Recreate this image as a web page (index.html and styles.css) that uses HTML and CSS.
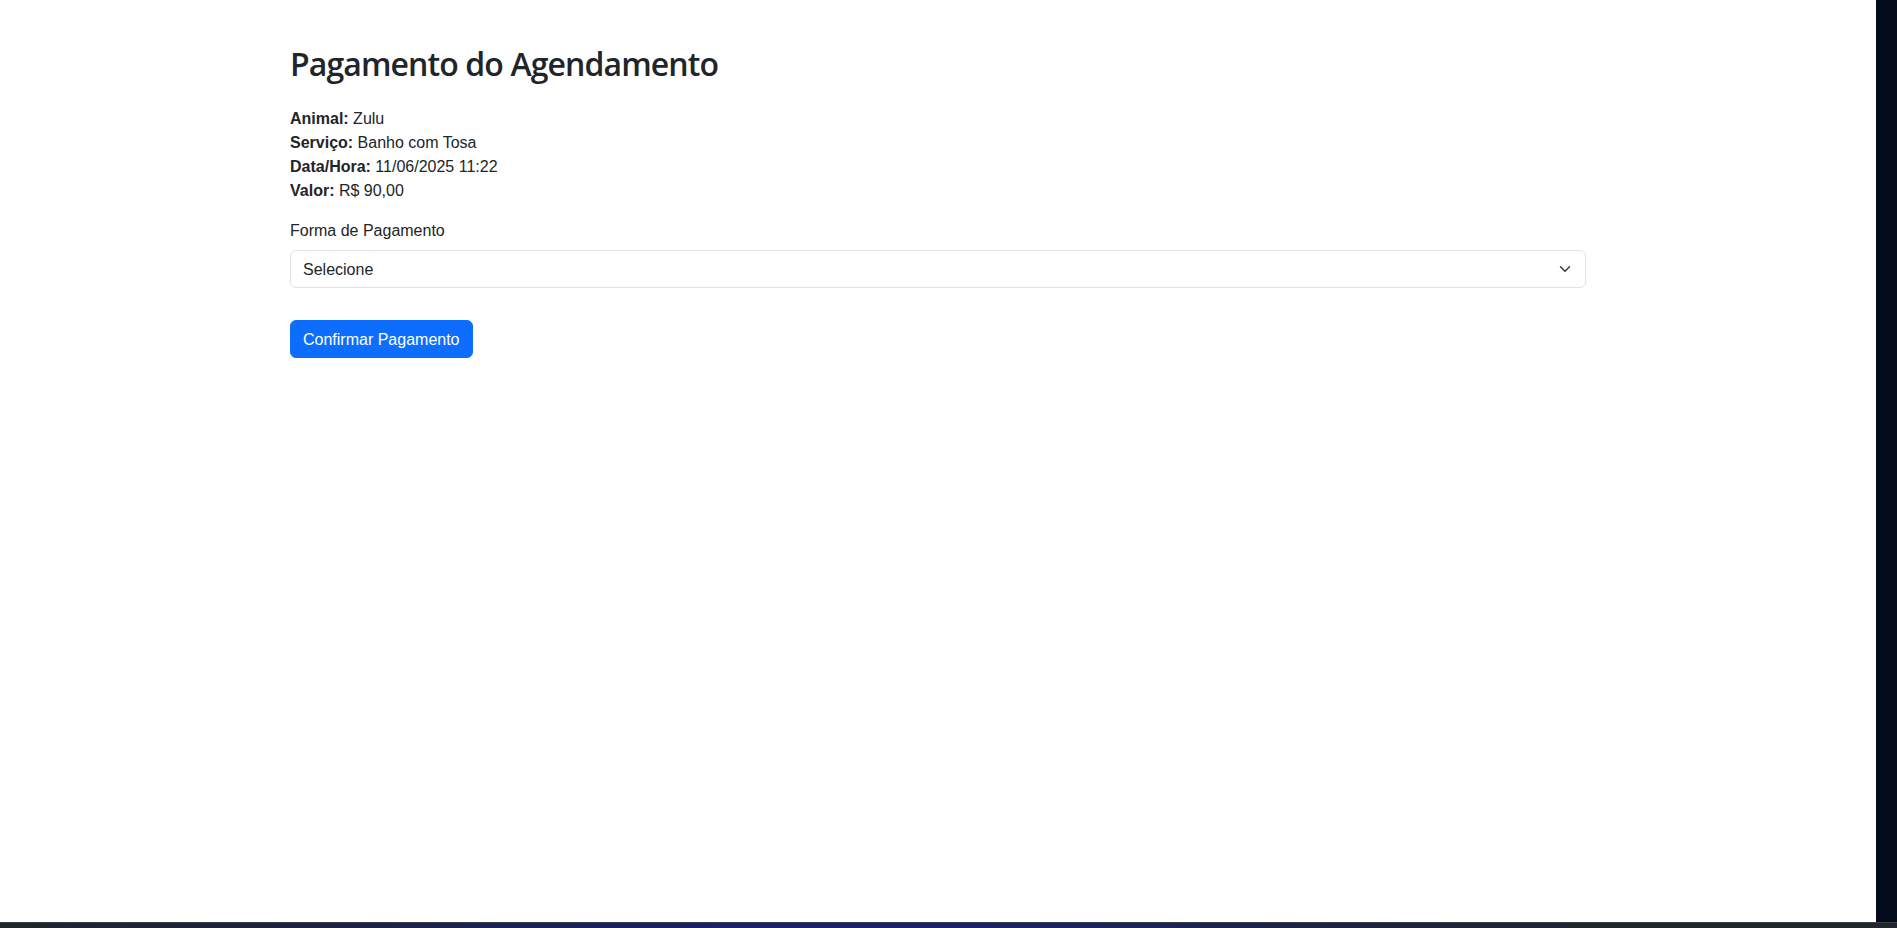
FILE: index.html
```html
<!DOCTYPE html>
<html lang="pt-BR">
<head>
<meta charset="utf-8">
<title>Pagamento do Agendamento</title>
<link rel="stylesheet" href="styles.css">
</head>
<body>
<div class="screen">
  <div class="viewport">
    <main class="container">
      <h2 class="title">Pagamento do Agendamento</h2>
      <div class="info">
        <div><strong>Animal:</strong> Zulu</div>
        <div><strong>Serviço:</strong> Banho com Tosa</div>
        <div><strong>Data/Hora:</strong> 11/06/2025 11:22</div>
        <div><strong>Valor:</strong> R$ 90,00</div>
      </div>
      <form class="form">
        <label class="form-label" for="forma">Forma de Pagamento</label>
        <div class="select-wrap">
          <select class="form-select" id="forma">
            <option>Selecione</option>
          </select>
          <svg class="chevron" width="16" height="12" viewBox="0 0 16 16" aria-hidden="true">
            <path d="m2 5 6 6 6-6" fill="none" stroke="#343a40" stroke-width="2" stroke-linecap="round" stroke-linejoin="round"/>
          </svg>
        </div>
        <button type="button" class="btn-primary">Confirmar Pagamento</button>
      </form>
    </main>
  </div>
  <div class="side"></div>
</div>
<div class="taskbar"></div>
</body>
</html>
```

FILE: styles.css
```css
* { box-sizing: border-box; }

html, body {
  margin: 0;
  padding: 0;
  height: 928px;
  overflow: hidden;
}

body {
  display: flex;
  flex-direction: column;
  background: #040c1c;
  font-family: "Segoe UI", "Liberation Sans", Arial, sans-serif;
  font-size: 16px;
  line-height: 1.5;
  color: #212529;
}

.screen {
  display: flex;
  height: 922px;
}

.viewport {
  width: 1876px;
  background: #ffffff;
}

.side {
  flex: 1;
  background: #040c1c;
}

.taskbar {
  height: 6px;
  border-top: 1px solid #3a3d45;
  background: linear-gradient(90deg, #22252c 0%, #1d2240 15%, #16226a 38%, #18246a 52%, #1c2448 68%, #22252c 85%, #22252c 100%);
}

.container {
  max-width: 1320px;
  margin: 0 auto;
  padding: 45px 12px 0;
}

.title {
  margin: 0 0 23.6px;
  font-family: "Open Sans", "Liberation Sans", Arial, sans-serif;
  font-size: 32px;
  font-weight: 600;
  letter-spacing: -0.9px;
  line-height: 38.4px;
  color: #212529;
}

.info {
  margin-bottom: 16px;
}

.info strong {
  font-weight: 700;
}

.form {
  display: flex;
  flex-direction: column;
  align-items: flex-start;
}

.form-label {
  display: block;
  margin-bottom: 7px;
}

.select-wrap {
  position: relative;
  align-self: stretch;
  margin-bottom: 32px;
}

.form-select {
  display: block;
  width: 100%;
  height: 38px;
  padding: 7px 36px 5px 12px;
  font-family: inherit;
  font-size: 16px;
  line-height: 1.5;
  color: #212529;
  background: #ffffff;
  border: 1px solid #dee2e6;
  border-radius: 6px;
  appearance: none;
  -webkit-appearance: none;
}

.chevron {
  position: absolute;
  right: 13px;
  top: 13px;
  pointer-events: none;
}

.btn-primary {
  height: 38px;
  padding: 7px 12px 5px;
  font-family: inherit;
  font-size: 16px;
  line-height: 1.5;
  color: #ffffff;
  background: #0d6efd;
  border: 1px solid #0d6efd;
  border-radius: 6px;
  cursor: pointer;
}
```
